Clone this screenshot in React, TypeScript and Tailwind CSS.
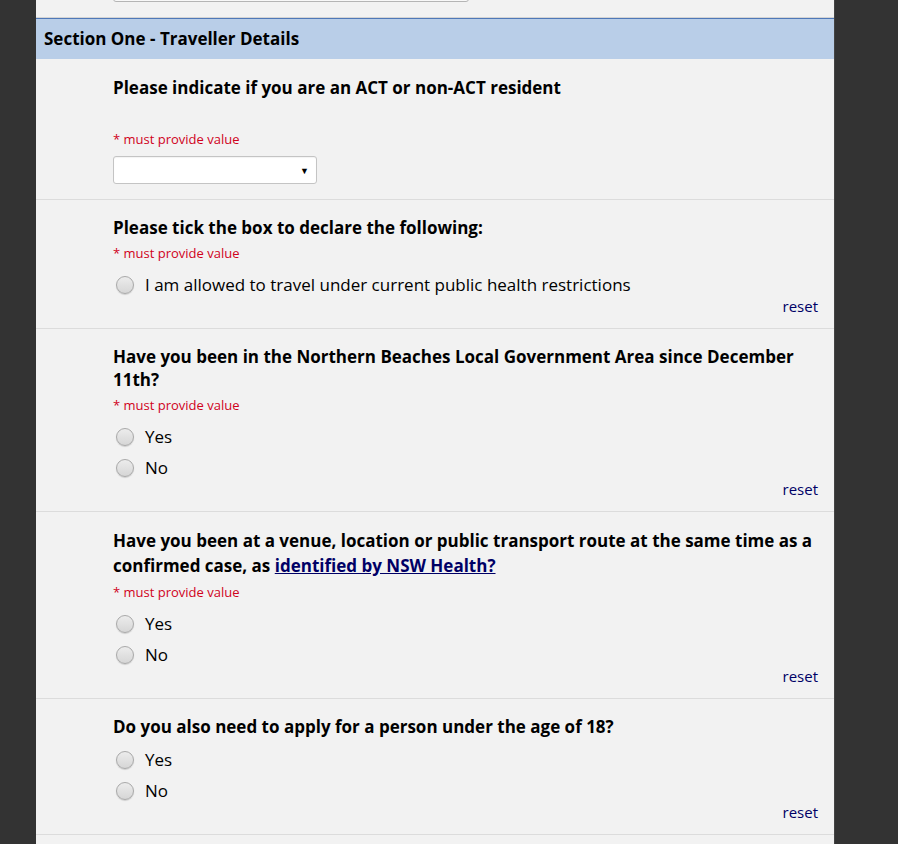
import React from "react";

type Question = {
  label: React.ReactNode;
  required: boolean;
  leading: string;
};

const Radio = ({ label }: { label: string }) => (
  <label className="flex h-[31px] items-center">
    <span className="ml-[3px] h-[18px] w-[18px] shrink-0 rounded-full border border-[#a9a9a9] bg-[linear-gradient(#ececec,#d6d6d6)] shadow-[0_1px_1px_rgba(0,0,0,0.15)]"></span>
    <span className="ml-[11px] text-[17px] leading-[23px] text-black">{label}</span>
  </label>
);

const Required = ({ className }: { className: string }) => (
  <div className={`text-[13px] leading-[18px] text-[#d0021b] ${className}`}>
    * must provide value
  </div>
);

const Reset = () => (
  <div className="-mt-[3px] flex justify-end pr-4">
    <a className="text-[15px] leading-[19px] text-[#000066]">reset</a>
  </div>
);

const YesNoRow = ({ label, required, leading }: Question) => (
  <div className="border-b border-[#dcdcdc] pb-3 pt-4">
    <div className="pl-[77px] pr-4">
      <div className={`text-[17px] font-bold text-black ${leading}`}>{label}</div>
      {required && <Required className="mt-[5px]" />}
      <div className={required ? "mt-[7px]" : "mt-[6px]"}>
        <Radio label="Yes" />
        <Radio label="No" />
      </div>
    </div>
    <Reset />
  </div>
);

export default function App() {
  return (
    <div className="min-h-screen bg-[#333333] pl-9 pr-[63px] font-['Open_Sans',sans-serif]">
      <div className="h-[844px] overflow-hidden border-r border-[#444] bg-[#f2f2f2]">
        {/* previous field, scrolled off */}
        <div className="flex h-[18px] items-end border-b border-[#d4d4d4] pb-[15px] pl-[77px]">
          <div className="h-[28px] w-[356px] shrink-0 rounded-[3px] border border-[#b5b5b5] bg-[#f8f8f8]"></div>
        </div>

        <div className="flex h-[41px] items-center border-t border-[#4f78b8] bg-[#b9cee8] px-2 text-[17px] font-bold text-black">
          Section One - Traveller Details
        </div>

        {/* residency */}
        <div className="border-b border-[#dcdcdc] pb-[15px] pl-[77px] pt-[17px]">
          <div className="text-[17px] font-bold leading-[23px] text-black">
            Please indicate if you are an ACT or non-ACT resident
          </div>
          <Required className="mt-[31px]" />
          <div className="mt-2 flex h-[28px] w-[204px] items-center justify-end rounded-[3px] border border-[#c4c4c4] bg-white pr-[7px] shadow-[inset_0_1px_1px_rgba(0,0,0,0.05)]">
            <span className="text-[9px] leading-none text-black">▼</span>
          </div>
        </div>

        {/* declaration */}
        <div className="border-b border-[#dcdcdc] pb-3 pt-4">
          <div className="pl-[77px]">
            <div className="text-[17px] font-bold leading-[23px] text-black">
              Please tick the box to declare the following:
            </div>
            <Required className="mt-[5px]" />
            <div className="mt-[7px]">
              <Radio label="I am allowed to travel under current public health restrictions" />
            </div>
          </div>
          <Reset />
        </div>

        <YesNoRow
          required
          leading="leading-[23px]"
          label="Have you been in the Northern Beaches Local Government Area since December 11th?"
        />
        <YesNoRow
          required
          leading="leading-[25px]"
          label={
            <>
              Have you been at a venue, location or public transport route at the same time as a
              confirmed case, as{" "}
              <a className="text-[#000066] underline">identified by NSW Health?</a>
            </>
          }
        />
        <YesNoRow
          required={false}
          leading="leading-[23px]"
          label="Do you also need to apply for a person under the age of 18?"
        />
      </div>
    </div>
  );
}
